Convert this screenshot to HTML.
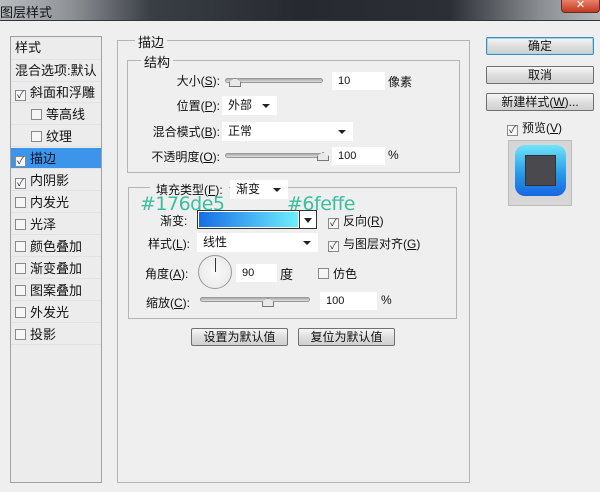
<!DOCTYPE html><html><head><meta charset="utf-8"><style>
*{box-sizing:border-box;margin:0;padding:0}
body{width:600px;height:492px;background:#efefef;font-family:"Liberation Sans","Noto Sans CJK SC",sans-serif;font-size:12px;color:#111;position:relative;overflow:hidden}
.a{position:absolute;white-space:nowrap}
.title{left:0;top:0;width:600px;height:21px;background:linear-gradient(90deg,#b9bcbf 0%,#8d9196 12%,#3a3f46 25%,#262a30 50%,#2c3036 75%,#8a8e93 90%,#b5b8bb 100%);border-bottom:1px solid #333}
.close{left:561px;top:0;width:39px;height:13px;background:linear-gradient(#e8806a,#c23a20);border:1px solid #6b2a20;border-top:none;border-radius:0 0 4px 4px;color:#fff;font-size:11px;text-align:center;line-height:11px}
.list{left:10px;top:36px;width:92px;height:447px;border:1px solid #a0a0a0;background:#ececec}
.it{position:absolute;left:0;width:90px;height:21px;line-height:21px;font-size:13px;border-bottom:1px solid #e2e2e2}
.cb{display:inline-block;width:11px;height:11px;border:1px solid #8a8a8a;background:#f6f6f6;vertical-align:-1px;margin-right:4px;font-size:10px;line-height:9px;text-align:center;color:#334}
.grp{position:absolute;border:1px solid #b4b4b4}
.lg{position:absolute;background:#efefef;padding:0 3px;font-size:13px}
.inp{position:absolute;background:#fff;height:18px;line-height:18px;padding-left:6px;font-size:11px}
.dd{position:absolute;background:#fff;height:19px;line-height:19px;padding-left:6px;font-size:12px}
.dd:after{content:"";position:absolute;right:7px;top:8px;border:4px solid transparent;border-top:4px solid #222;border-bottom:none}
.sl{position:absolute;height:5px;border:1px solid #999;border-radius:3px;background:linear-gradient(#aaa,#ddd)}
.th{position:absolute;width:12px;height:9px;background:#e8e8e8;border:1px solid #777;clip-path:polygon(50% 0,100% 45%,100% 100%,0 100%,0 45%)}
.btn{position:absolute;height:18px;border:1px solid #707070;border-radius:2px;background:linear-gradient(#f6f6f6,#dedede 50%,#d0d0d0);text-align:center;line-height:16px;font-size:12px}
.r{text-align:right}
.teal{color:#3abf9d;font-size:19px;font-family:"DejaVu Sans",sans-serif;letter-spacing:-0.5px}
</style></head><body>
<div class="a title"></div>
<div class="a" style="left:0;top:2px;font-size:13px;color:#111">图层样式</div>
<div class="a close">✕</div>

<div class="a list">
<div class="it" style="top:0;padding-left:4px;height:23px;line-height:22px">样式</div>
<div class="it" style="top:23px;padding-left:4px;height:22px">混合选项:默认</div>
<div class="it" style="top:45px;padding-left:4px"><span class="cb">✓</span>斜面和浮雕</div>
<div class="it" style="top:67px;padding-left:20px"><span class="cb"></span>等高线</div>
<div class="it" style="top:89px;padding-left:20px"><span class="cb"></span>纹理</div>
<div class="it" style="top:111px;padding-left:4px;background:#3d95eb;color:#112"><span class="cb">✓</span>描边</div>
<div class="it" style="top:133px;padding-left:4px"><span class="cb">✓</span>内阴影</div>
<div class="it" style="top:155px;padding-left:4px"><span class="cb"></span>内发光</div>
<div class="it" style="top:177px;padding-left:4px"><span class="cb"></span>光泽</div>
<div class="it" style="top:199px;padding-left:4px"><span class="cb"></span>颜色叠加</div>
<div class="it" style="top:221px;padding-left:4px"><span class="cb"></span>渐变叠加</div>
<div class="it" style="top:243px;padding-left:4px"><span class="cb"></span>图案叠加</div>
<div class="it" style="top:265px;padding-left:4px"><span class="cb"></span>外发光</div>
<div class="it" style="top:287px;padding-left:4px"><span class="cb"></span>投影</div>
</div>

<div class="grp" style="left:117px;top:40px;width:353px;height:443px"></div>
<div class="lg" style="left:135px;top:32px">描边</div>
<div class="grp" style="left:127px;top:60px;width:333px;height:113px"></div>
<div class="lg" style="left:141px;top:52px">结构</div>

<div class="a r" style="left:150px;top:72px;width:70px">大小(<u>S</u>):</div>
<div class="sl" style="left:225px;top:78px;width:98px"></div><div class="th" style="left:229px;top:78px"></div>
<div class="inp" style="left:332px;top:72px;width:53px">10</div>
<div class="a" style="left:388px;top:73px">像素</div>

<div class="a r" style="left:150px;top:97px;width:70px">位置(<u>P</u>):</div>
<div class="dd" style="left:222px;top:96px;width:55px">外部</div>

<div class="a r" style="left:140px;top:123px;width:80px">混合模式(<u>B</u>):</div>
<div class="dd" style="left:222px;top:122px;width:131px">正常</div>

<div class="a r" style="left:140px;top:148px;width:80px">不透明度(<u>O</u>):</div>
<div class="sl" style="left:225px;top:153px;width:100px"></div><div class="th" style="left:317px;top:152px"></div>
<div class="inp" style="left:332px;top:147px;width:53px">100</div>
<div class="a" style="left:388px;top:148px">%</div>

<div class="grp" style="left:128px;top:187px;width:329px;height:132px"></div>
<div class="a" style="left:150px;top:181px;background:#efefef;padding:0 6px;font-size:12px">填充类型(<u>F</u>):</div>
<div class="dd" style="left:230px;top:180px;width:58px">渐变</div>
<div class="a teal" style="left:140px;top:193px">#176de5</div>
<div class="a teal" style="left:287px;top:193px">#6feffe</div>

<div class="a" style="left:160px;top:212px">渐变:</div>
<div class="a" style="left:197px;top:210px;width:120px;height:19px;border:1px solid #333;background:#fff"></div>
<div class="a" style="left:199px;top:212px;width:99px;height:15px;background:linear-gradient(90deg,#176de5,#6feffe)"></div>
<div class="a" style="left:299px;top:211px;width:1px;height:17px;background:#333"></div>
<div class="a" style="left:304px;top:218px;border:4px solid transparent;border-top:5px solid #222;border-bottom:none"></div>
<div class="a" style="left:328px;top:212px"><span class="cb">✓</span>反向(<u>R</u>)</div>

<div class="a" style="left:148px;top:235px">样式(<u>L</u>):</div>
<div class="dd" style="left:197px;top:233px;width:121px">线性</div>
<div class="a" style="left:328px;top:235px"><span class="cb">✓</span>与图层对齐(<u>G</u>)</div>

<div class="a" style="left:145px;top:265px">角度(<u>A</u>):</div>
<div class="a" style="left:198px;top:255px;width:34px;height:34px;border-radius:50%;border:1px solid #999;background:radial-gradient(#fafafa,#e6e6e6)"></div>
<div class="a" style="left:215px;top:258px;width:1px;height:14px;background:#333"></div>
<div class="inp" style="left:236px;top:264px;width:41px">90</div>
<div class="a" style="left:280px;top:264px;font-size:13px">度</div>
<div class="a" style="left:318px;top:265px"><span class="cb"></span>仿色</div>

<div class="a" style="left:146px;top:294px">缩放(<u>C</u>):</div>
<div class="sl" style="left:200px;top:297px;width:110px"></div><div class="th" style="left:262px;top:298px"></div>
<div class="inp" style="left:320px;top:292px;width:57px">100</div>
<div class="a" style="left:381px;top:293px">%</div>

<div class="btn" style="left:191px;top:328px;width:97px">设置为默认值</div>
<div class="btn" style="left:298px;top:328px;width:97px">复位为默认值</div>

<div class="btn" style="left:486px;top:37px;width:108px;border-color:#3a8fb8;box-shadow:0 0 0 1px #9fd6ee inset">确定</div>
<div class="btn" style="left:486px;top:66px;width:108px">取消</div>
<div class="btn" style="left:486px;top:93px;width:108px">新建样式(<u>W</u>)...</div>
<div class="a" style="left:507px;top:119px;font-size:12px"><span class="cb">✓</span>预览(<u>V</u>)</div>
<div class="a" style="left:508px;top:140px;width:64px;height:66px;background:#d6d6d6;border:1px solid #bbb"></div>
<div class="a" style="left:515px;top:145px;width:51px;height:51px;border-radius:10px;background:linear-gradient(#6fe4fb,#2a9ae8 55%,#1766e0)"></div>
<div class="a" style="left:525px;top:155px;width:31px;height:31px;background:#4a4a4e;border:1px solid #333"></div>
</body></html>
